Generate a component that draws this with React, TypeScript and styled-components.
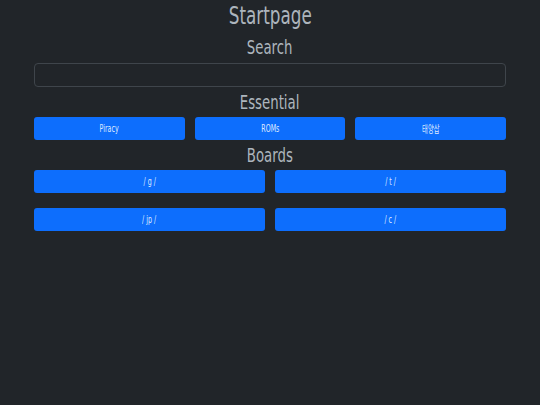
import React from "react";
import styled, { createGlobalStyle } from "styled-components";

const Global = createGlobalStyle`
  html, body { margin: 0; padding: 0; background: #212529; }
  body { font-family: "DejaVu Sans", "Noto Sans CJK KR", sans-serif; }
  * { box-sizing: border-box; }
`;

const Page = styled.div`
  min-height: 405px;
  background: #212529;
  padding: 0 34px;
  display: flex;
  flex-direction: column;
`;

const Heading = styled.div<{ $size: number; $h: number }>`
  height: ${(p) => p.$h}px;
  display: flex;
  align-items: center;
  justify-content: center;
  color: #adb5bd;
  font-size: ${(p) => p.$size}px;
  white-space: nowrap;
`;

const Squeeze = styled.span<{ $x?: number }>`
  display: inline-block;
  transform: scaleX(${(p) => p.$x ?? 0.7});
`;

const SearchInput = styled.input`
  margin-top: 1px;
  height: 24px;
  width: 100%;
  background: #212529;
  border: 1px solid #3f454b;
  border-radius: 4px;
  color: #dee2e6;
  outline: none;
`;

const Grid = styled.div<{ $cols: number; $rowGap?: number }>`
  display: grid;
  grid-template-columns: repeat(${(p) => p.$cols}, 1fr);
  column-gap: 10px;
  row-gap: ${(p) => p.$rowGap ?? 0}px;
`;

const LinkButton = styled.a`
  height: 23px;
  display: flex;
  align-items: center;
  justify-content: center;
  background: #0d6efd;
  border-radius: 3px;
  color: #dfe9ff;
  font-size: 10px;
  text-decoration: none;
  white-space: nowrap;
`;

const essentials = ["Piracy", "ROMs", "태양삽"];
const boards = ["/ g /", "/ t /", "/ jp /", "/ c /"];

export default function App() {
  return (
    <>
      <Global />
      <Page>
        <Heading $size={24} $h={32}>
          <Squeeze>Startpage</Squeeze>
        </Heading>
        <Heading $size={19} $h={30}>
          <Squeeze>Search</Squeeze>
        </Heading>
        <SearchInput type="text" />
        <Heading $size={19} $h={30}>
          <Squeeze>Essential</Squeeze>
        </Heading>
        <Grid $cols={3}>
          {essentials.map((e) => (
            <LinkButton key={e} href="#">
              <Squeeze $x={0.63}>{e}</Squeeze>
            </LinkButton>
          ))}
        </Grid>
        <Heading $size={19} $h={30}>
          <Squeeze>Boards</Squeeze>
        </Heading>
        <Grid $cols={2} $rowGap={15}>
          {boards.map((b) => (
            <LinkButton key={b} href="#">
              <Squeeze $x={0.63}>{b}</Squeeze>
            </LinkButton>
          ))}
        </Grid>
      </Page>
    </>
  );
}
